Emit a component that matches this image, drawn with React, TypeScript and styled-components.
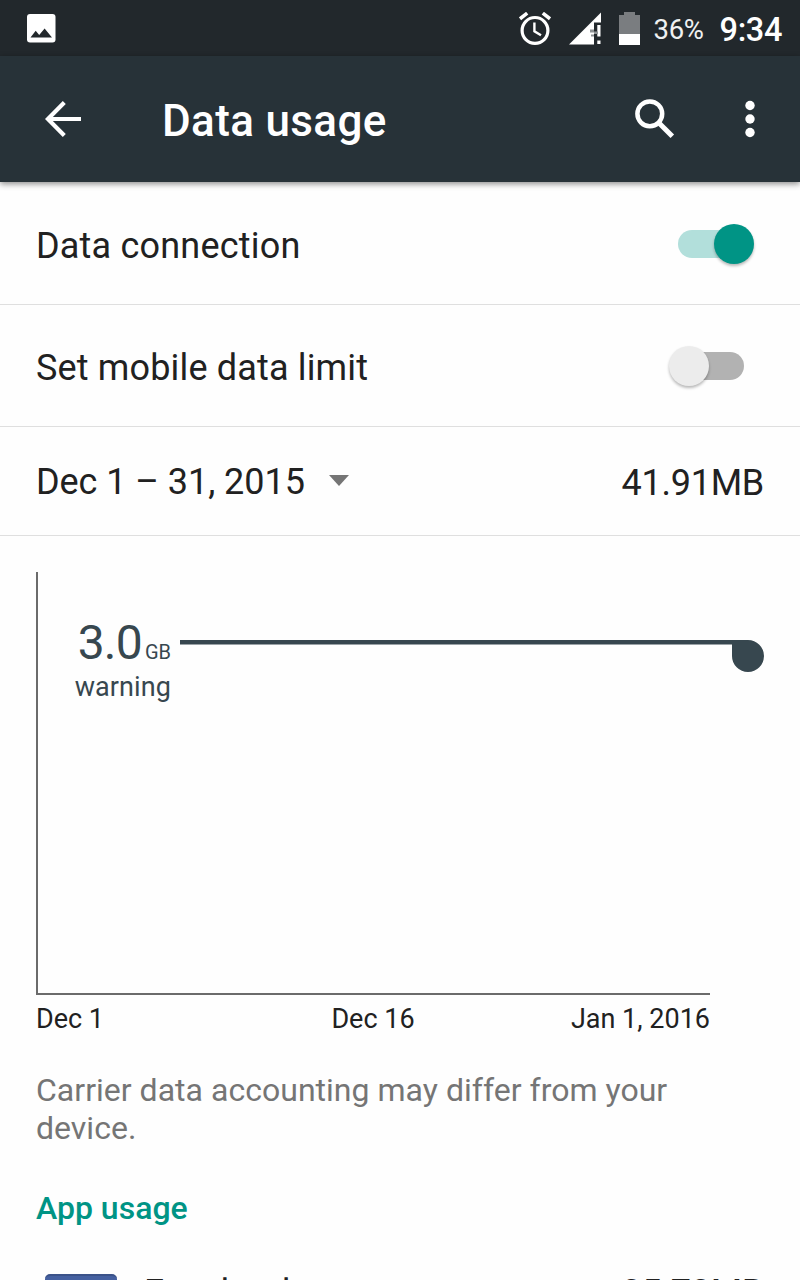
import React from "react";
import styled, { createGlobalStyle } from "styled-components";

const GlobalStyle = createGlobalStyle`
  * { box-sizing: border-box; }
  html, body { margin: 0; background: #fefefe; overflow: hidden; }
  body { font-family: Roboto, "Noto Sans", sans-serif; color: #212121; }
  svg { display: block; flex: none; }
`;

const Screen = styled.div`
  width: 800px;
  height: 1280px;
  overflow: hidden;
  display: flex;
  flex-direction: column;
  background: #fefefe;
`;

const StatusBar = styled.div`
  height: 56px;
  flex: none;
  display: flex;
  align-items: center;
  justify-content: space-between;
  padding: 0 18px 0 27px;
  background: #22282c;
  color: #fff;
`;

const StatusIcons = styled.div`
  display: flex;
  align-items: center;
`;

const SystemIcons = styled.div`
  display: flex;
  align-items: center;
  gap: 18px;
`;

const BatteryLevel = styled.span`
  margin: 3px 0 0 14px;
  width: 66px;
  font-size: 27.5px;
  line-height: 32px;
  letter-spacing: -0.4px;
  color: #f0f1f1;
`;

const Clock = styled.span`
  margin-top: 3px;
  font-size: 32.5px;
  line-height: 36px;
  font-weight: 500;
  letter-spacing: -0.4px;
`;

const AppBar = styled.header`
  height: 126px;
  flex: none;
  display: flex;
  align-items: center;
  padding: 0 44px 0 45px;
  background: #273238;
  color: #fff;
  box-shadow: 0 2px 6px rgba(0, 0, 0, 0.45);
`;

const Title = styled.h1`
  margin: 4px 0 0 80px;
  flex: 1;
  font-size: 44px;
  line-height: 52px;
  font-weight: 500;
  letter-spacing: 0.35px;
`;

const AppBarActions = styled.div`
  display: flex;
  gap: 69px;
  align-items: center;
`;

const Row = styled.div<{ $height: number; $top?: number }>`
  height: ${(p) => p.$height}px;
  flex: none;
  display: flex;
  align-items: center;
  justify-content: space-between;
  padding: ${(p) => p.$top ?? 0}px 36px 0;
  border-bottom: 1px solid #dfdfdf;
  font-size: 36px;
  line-height: 42px;
`;

const RowLabel = styled.span<{ $drop?: number; $tracking?: number }>`
  padding-top: ${(p) => p.$drop ?? 0}px;
  letter-spacing: ${(p) => p.$tracking ?? 0}px;
`;

const Track = styled.div<{ $on: boolean }>`
  width: ${(p) => (p.$on ? 66 : 65)}px;
  height: 28px;
  display: flex;
  align-items: center;
  justify-content: ${(p) => (p.$on ? "flex-end" : "flex-start")};
  margin-right: 20px;
  border-radius: 14px;
  background: ${(p) => (p.$on ? "#b2dfdb" : "#b2b2b2")};
`;

const Thumb = styled.div<{ $on: boolean }>`
  width: 40px;
  height: 40px;
  flex: none;
  margin: ${(p) => (p.$on ? "0 -10px 0 0" : "0 0 0 -10px")};
  border-radius: 50%;
  background: ${(p) => (p.$on ? "#009485" : "#ececec")};
  box-shadow: 0 2px 3px rgba(0, 0, 0, 0.28);
`;

const Period = styled.div`
  display: flex;
  align-items: center;
  gap: 24px;
`;

const DropArrow = styled.svg`
  margin-bottom: 1px;
`;

const ChartSection = styled.section`
  padding: 36px 36px 0;
`;

const Plot = styled.div`
  width: 674px;
  height: 423px;
  border-left: 2px solid #6b6b6b;
  border-bottom: 2px solid #6b6b6b;
  padding-top: 44px;
`;

const Warning = styled.div`
  width: 726px;
  display: flex;
  align-items: flex-start;
  color: #37474f;
`;

const WarningLabel = styled.div`
  width: 133px;
  margin-right: 9px;
  text-align: right;
`;

const WarningValue = styled.div`
  height: 55px;
  font-size: 48px;
  line-height: 54px;
  letter-spacing: -0.8px;
`;

const Unit = styled.span`
  margin-left: 3px;
  font-size: 20px;
  letter-spacing: 0;
`;

const WarningText = styled.div`
  font-size: 27px;
  line-height: 32px;
  letter-spacing: 0.1px;
`;

const Sweep = styled.svg`
  margin-top: 24px;
`;

const Axis = styled.div`
  width: 674px;
  display: grid;
  grid-template-columns: 1fr auto 1fr;
  padding-top: 8px;
  font-size: 27px;
  line-height: 32px;

  > :last-child {
    text-align: right;
  }
`;

const Note = styled.p`
  margin: 36px 36px 0;
  font-size: 32px;
  line-height: 38px;
  letter-spacing: 0.02px;
  color: #757575;
`;

const SectionTitle = styled.h2`
  margin: 42px 36px 0;
  font-size: 32px;
  line-height: 38px;
  font-weight: 500;
  color: #009485;
`;

const AppRow = styled.div`
  flex: none;
  display: flex;
  align-items: flex-start;
  margin-top: 45px;
  padding: 0 36px 0 45px;
  font-size: 36px;
  line-height: 42px;
`;

const AppIcon = styled.div`
  width: 72px;
  height: 72px;
  margin-top: 2px;
  border-radius: 5px;
  background: #4560a0;
  border-top: 2px solid #3b5289;
`;

const AppName = styled.span`
  flex: 1;
  margin-left: 27px;
`;

const AppTraffic = styled.span`
  letter-spacing: -0.25px;
`;

const Toggle = ({ on }: { on: boolean }) => (
  <Track $on={on}>
    <Thumb $on={on} />
  </Track>
);

const PictureIcon = () => (
  <svg width="29" height="29" viewBox="0 0 29 29">
    <rect width="28.5" height="28.5" rx="3" fill="#fff" />
    <path d="M3.5 23.5 8.700 16.800 12.200 21 17.600 14.500 25 23.500z" fill="#22282c" />
  </svg>
);

const AlarmIcon = () => (
  <svg width="32" height="33" viewBox="0 0 32 33" fill="none" stroke="#fff">
    <circle cx="16" cy="18.400" r="12.900" strokeWidth="3.200" />
    <path d="M1 6.800 8.200 1.200M23.800 1.200 31 6.800" strokeWidth="3.600" />
    <path d="M15.400 10.500v8.700l6.600 4" strokeWidth="2.400" />
  </svg>
);

const SignalIcon = () => (
  <svg width="32" height="33" viewBox="0 0 32 33">
    <path d="M0 32.500 32 0.500V32.500z" fill="#fff" />
    <path d="M25 10.500h7V33h-7z" fill="#22282c" />
    <path d="M28.300 13H31.500v11.500h-3.200zM28.300 28.500h3.200v3.500h-3.200z" fill="#fff" />
    <path d="M21 17.500h4v3h-4zM25 19.500h4v2.500h-4zM22 22.500h3v2h-3z" fill="#8e9294" />
  </svg>
);

const BatteryIcon = () => (
  <svg width="21" height="33" viewBox="0 0 21 33">
    <path d="M0 3h5V0h11v3h5v19H0z" fill="#7a7d80" />
    <path d="M0 22h21v11H0z" fill="#fff" />
  </svg>
);

const BackIcon = () => (
  <svg width="37" height="36" viewBox="0 0 37 36" fill="none" stroke="#fff" strokeWidth="4.200">
    <path d="M19.300 1.500 2.900 18l16.400 16.500M3 18h33" />
  </svg>
);

const SearchIcon = () => (
  <svg width="40" height="40" viewBox="0 0 40 40" fill="none" stroke="#fff">
    <circle cx="14.800" cy="14.800" r="12.400" strokeWidth="4.500" />
    <path d="M24.500 24.500 37.300 37.300" strokeWidth="5" />
  </svg>
);

const MoreIcon = () => (
  <svg width="12" height="38" viewBox="0 0 12 38" fill="#fff">
    <circle cx="6" cy="5.500" r="4.700" />
    <circle cx="6" cy="19" r="4.700" />
    <circle cx="6" cy="32.500" r="4.700" />
  </svg>
);

export default function App() {
  return (
    <>
      <GlobalStyle />
      <Screen>
        <StatusBar>
          <PictureIcon />
          <StatusIcons>
            <SystemIcons>
              <AlarmIcon />
              <SignalIcon />
              <BatteryIcon />
            </SystemIcons>
            <BatteryLevel>36%</BatteryLevel>
            <Clock>9:34</Clock>
          </StatusIcons>
        </StatusBar>
        <AppBar>
          <BackIcon />
          <Title>Data usage</Title>
          <AppBarActions>
            <SearchIcon />
            <MoreIcon />
          </AppBarActions>
        </AppBar>
        <Row $height={123} $top={2}>
          <RowLabel $drop={3} $tracking={0.2}>Data connection</RowLabel>
          <Toggle on />
        </Row>
        <Row $height={122}>
          <RowLabel $drop={4} $tracking={0.16}>Set mobile data limit</RowLabel>
          <Toggle on={false} />
        </Row>
        <Row $height={109}>
          <Period>
            <RowLabel $drop={2} $tracking={-0.05}>Dec 1 – 31, 2015</RowLabel>
            <DropArrow width="20" height="11" viewBox="0 0 20 11">
              <path d="M0 0h20L10 11z" fill="#757575" />
            </DropArrow>
          </Period>
          <RowLabel $drop={4} $tracking={-0.25}>41.91MB</RowLabel>
        </Row>
        <ChartSection>
          <Plot>
            <Warning>
              <WarningLabel>
                <WarningValue>
                  3.0<Unit>GB</Unit>
                </WarningValue>
                <WarningText>warning</WarningText>
              </WarningLabel>
              <Sweep width="584" height="32" viewBox="0 0 584 32" fill="#37474f">
                <path d="M0 0H568a16 16 0 1 1-16 16V4.500H0z" />
              </Sweep>
            </Warning>
          </Plot>
          <Axis>
            <span>Dec 1</span>
            <span>Dec 16</span>
            <span>Jan 1, 2016</span>
          </Axis>
        </ChartSection>
        <Note>Carrier data accounting may differ from your device.</Note>
        <SectionTitle>App usage</SectionTitle>
        <AppRow>
          <AppIcon />
          <AppName>Facebook</AppName>
          <AppTraffic>35.73MB</AppTraffic>
        </AppRow>
      </Screen>
    </>
  );
}
